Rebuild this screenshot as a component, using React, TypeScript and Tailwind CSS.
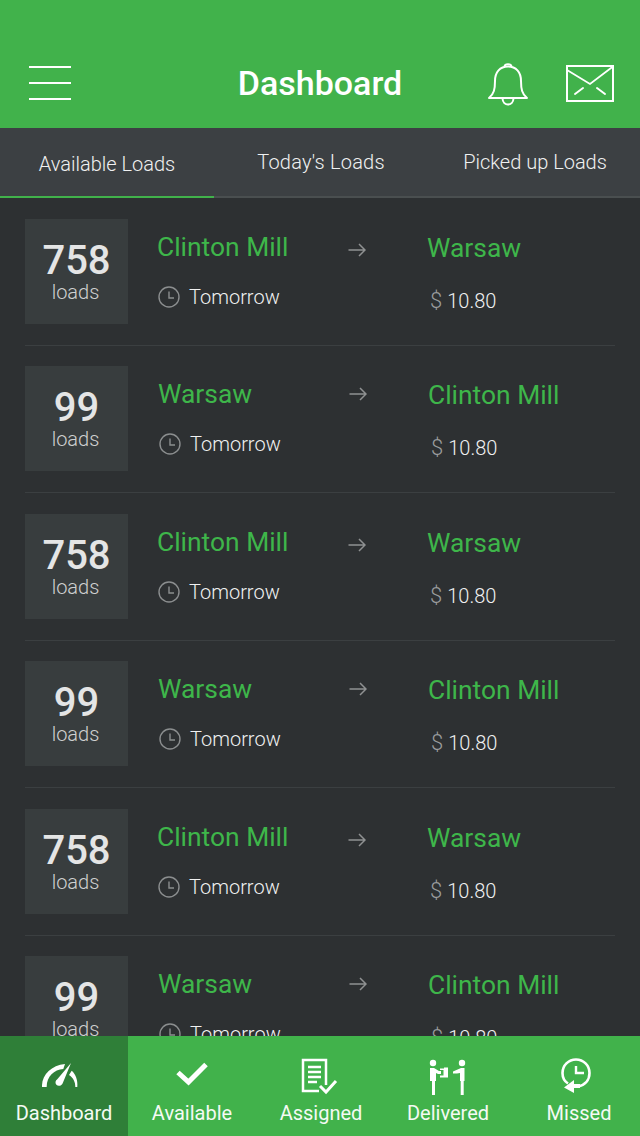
import React from "react";

const font = { fontFamily: "Roboto, sans-serif" };

function Menu() {
  return (
    <svg width="42" height="36" viewBox="0 0 42 36" fill="#fff">
      <rect x="0" y="1" width="42" height="2" />
      <rect x="0" y="17" width="42" height="2" />
      <rect x="0" y="33" width="42" height="2" />
    </svg>
  );
}

function Bell() {
  return (
    <svg width="40" height="43" viewBox="0 0 40 43" fill="none" stroke="#fff" strokeWidth="2">
      <path d="M1 35 C6 31 7 26 7 18 C7 9 12 3.5 20 3.5 C28 3.5 33 9 33 18 C33 26 34 31 39 35 Z" strokeLinejoin="round" />
      <path d="M16.5 3.5 C17 0.5 23 0.5 23.5 3.5" />
      <path d="M14.5 35.5 C15 43.5 25 43.5 25.5 35.5" />
    </svg>
  );
}

function Mail() {
  return (
    <svg width="48" height="37" viewBox="0 0 48 37" fill="none" stroke="#fff" strokeWidth="2">
      <rect x="1" y="1" width="46" height="35" />
      <path d="M1 5 L24 19 L47 1.5" strokeWidth="1.8" />
      <path d="M9 29 L17 23 M39 29 L31 23" strokeLinecap="round" />
    </svg>
  );
}

function Clock() {
  return (
    <svg width="22" height="22" viewBox="0 0 22 22" fill="none" stroke="#8b8e8f" strokeWidth="1.4" className="shrink-0">
      <circle cx="11" cy="11" r="10" />
      <path d="M11 5.5 V12 H16" />
    </svg>
  );
}

function Arrow() {
  return (
    <svg width="18" height="14" viewBox="0 0 18 14" fill="none" stroke="#8f9192" strokeWidth="1.5">
      <path d="M0.5 7 H17 M11 1 L17 7 L11 13" />
    </svg>
  );
}

function Gauge() {
  return (
    <svg width="36" height="25" viewBox="0 0 36 25" fill="#fff">
      <path d="M0 24 C-0.5 12 9 2.5 23 1 L21.3 6 C12 6.5 4.5 14 4.7 24 Z" />
      <path d="M29.7 7.7 C33.5 11 36 17 35.3 24 L33.3 24 C33.5 19 31 14.5 27 12 Z" />
      <path d="M29 0 L21 19.5 C19.5 24.5 13 23.5 13.5 19 C13.7 17.8 14.5 16.8 15.5 16 Z" />
    </svg>
  );
}

function Check() {
  return (
    <svg width="32" height="24" viewBox="0 0 32 24" fill="none" stroke="#fff" strokeWidth="5">
      <path d="M2 10.5 L12.5 20 L30 2.5" />
    </svg>
  );
}

function Assigned() {
  return (
    <svg width="38" height="38" viewBox="0 0 38 38" fill="none" stroke="#fff">
      <path d="M25 27 V2 H2 V33 H18" strokeWidth="2.5" />
      <path d="M7 9 H20 M7 14 H20 M7 19 H20 M7 24 H16" strokeWidth="2.4" />
      <path d="M19 28 L25 34 L35 23" strokeWidth="3" />
    </svg>
  );
}

function Delivered() {
  return (
    <svg width="38" height="37" viewBox="0 0 38 37" fill="#fff">
      <circle cx="4" cy="4" r="3.2" />
      <circle cx="33" cy="4" r="3.2" />
      <path d="M1 9 H5 L10 12 H12 V15 H9 L7 14 V22 H6 V36 H3 V22 H1 Z" />
      <path d="M11 9.5 H15 V8.5 H19 V18.5 H11 V16.5 H14.5 V11 H11 Z" />
      <path d="M35.5 9 H32 L24 12.5 V14.5 H28 L31 14 V22 H31.7 V36 H34.7 V22 H35.5 Z" />
    </svg>
  );
}

function Missed() {
  return (
    <svg width="30" height="36" viewBox="0 0 30 36" fill="none" stroke="#fff">
      <path d="M7 25.5 C3 23 1.5 19 1.5 15 C1.5 7.5 7.5 1.5 15 1.5 C22.5 1.5 28.5 7.5 28.5 15 C28.5 22 24 27 17 28.5" strokeWidth="2.6" />
      <path d="M15 8 V15 H23" strokeWidth="2.4" />
      <path d="M13 22 V35 L3 29.5 Z" fill="#fff" stroke="none" />
      <path d="M12 26 H19 V30 H12 Z" fill="#fff" stroke="none" />
    </svg>
  );
}

function Row({ even, last }: { even: boolean; last?: boolean }) {
  const from = even ? "Warsaw" : "Clinton Mill";
  const to = even ? "Clinton Mill" : "Warsaw";
  return (
    <div
      className={`mx-[25px] shrink-0 border-b border-[#3b3f41] flex ${even ? "h-[147px] pt-[20px]" : "h-[148px] pt-[21px]"} ${last ? "border-b-0" : ""}`}
    >
      <div className="w-[103px] h-[105px] bg-[#383d3e] flex flex-col items-center shrink-0">
        <div className="text-[40px] leading-[40px] font-medium text-[#e4e5e5] mt-[22px]">{even ? "99" : "758"}</div>
        <div className="text-[20px] leading-[24px] font-light text-[#d0d1d1] mt-[-1px] mr-[2px]">loads</div>
      </div>
      <div className={`${even ? "ml-[31px]" : "ml-[30px]"} w-[190px] shrink-0`}>
        <div className="text-[26.4px] leading-[30px] text-[#3eb64a] mt-[13px] ml-[-1px]">{from}</div>
        <div className="flex items-center gap-[9px] mt-[24px] h-[22px]">
          <Clock />
          <span className="text-[20px] font-light text-[#f0f1f1]">Tomorrow</span>
        </div>
      </div>
      <div className={`w-[80px] shrink-0 ${even ? "pt-[21px]" : "pt-[24px]"}`}>
        <Arrow />
      </div>
      <div className="shrink-0">
        <div className="text-[26.4px] leading-[30px] text-[#3eb64a] mt-[14px] ml-[-1px]">{to}</div>
        <div className="flex items-baseline mt-[23px] ml-[2px] text-[20px] leading-[30px] font-light text-[#f0f1f1]">
          <span className="text-[#9b9d9e] mr-[5px] text-[22px]">$</span>
          <span>10.80</span>
        </div>
      </div>
    </div>
  );
}

function Tab({
  icon,
  label,
  active,
  iconClass,
  labelClass,
}: {
  icon: React.ReactNode;
  label: string;
  active?: boolean;
  iconClass?: string;
  labelClass?: string;
}) {
  return (
    <div className={`flex-1 flex flex-col items-center ${active ? "bg-[#2f7f38]" : ""}`}>
      <div className={`h-[48px] mt-[12px] flex items-end justify-center ${iconClass ?? ""}`}>{icon}</div>
      <div className={`text-[20px] leading-[24px] text-[#f4faf4] mt-[5px] ${labelClass ?? ""}`}>{label}</div>
    </div>
  );
}

export default function App() {
  const rows = [false, true, false, true, false, true];
  return (
    <div style={font} className="w-[640px] h-[1136px] flex flex-col overflow-hidden bg-[#2d3032]">
      <header className="h-[128px] shrink-0 bg-[#41b24b] relative flex items-end justify-between pb-[27px] pl-[29px] pr-[26px]">
        <Menu />
        <div className="absolute left-0 right-0 top-[62px] text-center text-[34px] leading-[42px] font-medium text-white">Dashboard</div>
        <div className="flex items-start gap-[38px] mb-[-5px]">
          <div className="mt-[-2px]"><Bell /></div>
          <Mail />
        </div>
      </header>
      <nav className="h-[70px] shrink-0 bg-[#3c4043] flex text-[20px] font-light text-[#f0f1f1]">
        <div className="w-[214px] h-full border-b-2 border-[#41b24b] flex justify-center pt-[24px] leading-[24px]">Available Loads</div>
        <div className="w-[214px] h-full border-b-2 border-[#4a4f50] flex justify-center pt-[22px] leading-[24px] tracking-[0.2px]">Today's Loads</div>
        <div className="w-[212px] h-full border-b-2 border-[#4a4f50] flex justify-center pt-[22px] pl-[2px] leading-[24px]">Picked up Loads</div>
      </nav>
      <main className="flex-1 min-h-0 overflow-hidden flex flex-col">
        {rows.map((even, i) => (
          <Row key={i} even={even} last={i === 5} />
        ))}
      </main>
      <footer className="h-[100px] shrink-0 bg-[#41b24b] flex">
        <Tab icon={<Gauge />} label="Dashboard" active iconClass="pb-[8px] mr-[8px]" />
        <Tab icon={<Check />} label="Available" iconClass="pb-[10px]" />
        <Tab icon={<Assigned />} label="Assigned" labelClass="ml-[2px]" />
        <Tab icon={<Delivered />} label="Delivered" />
        <Tab icon={<Missed />} label="Missed" iconClass="pb-[2px]" labelClass="ml-[6px]" />
      </footer>
    </div>
  );
}
